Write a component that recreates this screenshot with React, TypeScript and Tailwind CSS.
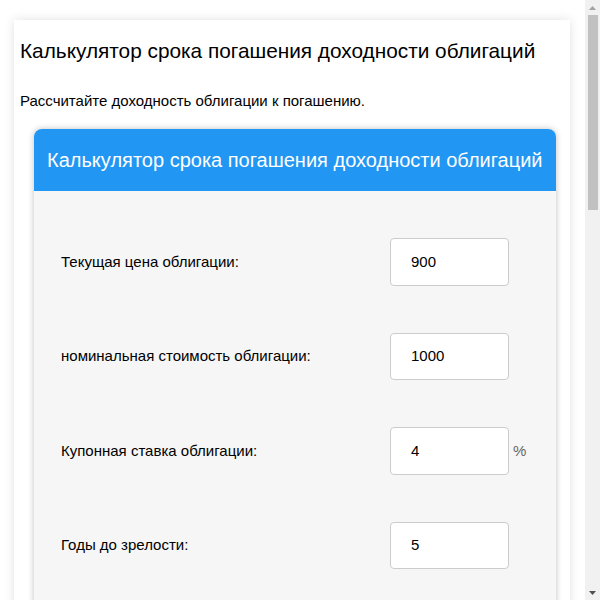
import React from "react";

const rows: { label: string; value: string; suffix?: string }[] = [
  { label: "Текущая цена облигации:", value: "900" },
  { label: "номинальная стоимость облигации:", value: "1000" },
  { label: "Купонная ставка облигации:", value: "4", suffix: "%" },
  { label: "Годы до зрелости:", value: "5" },
  { label: "Частота выплат в год:", value: "1" },
];

function FakeScrollbar() {
  return (
    <div className="fixed top-0 right-0 w-[15px] h-screen bg-[#f1f1f1] flex flex-col items-center">
      <div className="h-[15px] w-full flex items-center justify-center">
        <svg width="7" height="4" viewBox="0 0 7 4">
          <path d="M0 4 L3.5 0 L7 4 Z" fill="#a3a3a3" />
        </svg>
      </div>
      <div className="w-[10px] h-[195px] bg-[#c1c1c1]" />
      <div className="flex-1" />
      <div className="h-[15px] w-full flex items-center justify-center">
        <svg width="7" height="4" viewBox="0 0 7 4">
          <path d="M0 0 L7 0 L3.5 4 Z" fill="#505050" />
        </svg>
      </div>
    </div>
  );
}

export default function App() {
  return (
    <div className="bg-white min-h-screen" style={{ fontFamily: '"Liberation Sans", Arial, sans-serif' }}>
      <div className="pt-5 pb-10">
        <div className="ml-[14px] w-[556px] bg-white shadow-[0_0_10px_rgba(0,0,0,0.12)] pt-[19px] pb-10">
          <h1 className="ml-[6px] text-[20.8px] leading-[24px] text-black">
            Калькулятор срока погашения доходности облигаций
          </h1>
          <p className="ml-[6px] mt-[28px] text-[15px] leading-[20px] text-black">
            Рассчитайте доходность облигации к погашению.
          </p>
          <div className="ml-[20px] mt-[18px] w-[522px] rounded-lg shadow-[0_0_6px_rgba(0,0,0,0.25)] overflow-hidden">
            <div className="bg-[#2196f3] h-[62px] flex items-center px-[13px]">
              <h2 className="text-white text-[20px] leading-[24px]">
                Калькулятор срока погашения доходности облигаций
              </h2>
            </div>
            <div className="bg-[#f6f6f6] pt-[47px] pb-[40px] pl-[27px] flex flex-col gap-[47px]">
              {rows.map((r) => (
                <div key={r.label} className="flex items-center h-[47.5px]">
                  <span className="w-[329px] text-[15px] text-black">{r.label}</span>
                  <div className="w-[119px] h-[47.5px] bg-white border border-[#cccccc] rounded flex items-center pl-[20px] text-[15px] text-black">
                    {r.value}
                  </div>
                  {r.suffix && <span className="ml-[4px] text-[15px] text-[#666666]">{r.suffix}</span>}
                </div>
              ))}
              <div className="flex justify-center pr-[27px]">
                <button className="bg-[#2196f3] text-white text-[16px] px-6 py-3 rounded">Рассчитать</button>
              </div>
              <div className="h-[420px] pr-[27px]">
                <div className="bg-white border border-[#dddddd] rounded h-full p-4 text-[15px]">
                  Доходность к погашению: 6.44%
                </div>
              </div>
            </div>
          </div>
        </div>
      </div>
      <FakeScrollbar />
    </div>
  );
}
